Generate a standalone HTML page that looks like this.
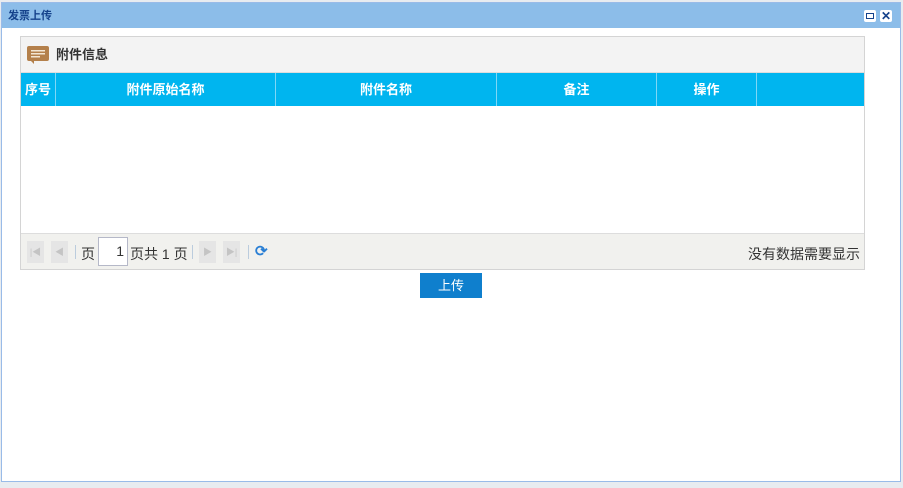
<!DOCTYPE html>
<html><head><meta charset="utf-8"><style>
*{margin:0;padding:0;box-sizing:border-box}
body{width:903px;height:488px;background:#e8ecf0;position:relative;overflow:hidden;font-family:"Liberation Sans","Noto Sans CJK SC",sans-serif;font-size:13px;color:#333}
.win{position:absolute;left:1px;top:2px;width:900px;height:480px;border:1px solid #99bbe8;background:#fff}
.title{height:25px;background:#8cbde9;color:#15428b;font-size:11px;font-weight:bold;line-height:26px;padding-left:6px}
.tb{position:absolute;top:7px;width:12px;height:12px;background:#fff;border-radius:2px}
.panel{position:absolute;left:18px;top:33px;width:845px;height:234px;border:1px solid #d4d4d4}
.ph{height:36px;background:#f3f3f3;border-bottom:1px solid #ddd;font-weight:bold;font-size:13px;line-height:36px;padding-left:35px;position:relative}
.th{height:33px;background:#00b5ef;display:flex;color:#fff;font-weight:bold;font-size:13px}
.th div{border-right:1px solid #7fd7f6;text-align:center;line-height:33px}
.pager{position:absolute;left:0;top:196px;width:843px;height:36px;background:#f1f1ee;border-top:1px solid #ddd}
.pb{position:absolute;top:7px;width:17px;height:22px;background:#e5e5e5;color:#c4c4c4;font-size:9px;line-height:22px;text-align:center}
.sep{position:absolute;top:11px;width:1px;height:14px;background:#bcd}
.t{position:absolute;top:10px;font-size:14px}
.btn{position:absolute;left:418px;top:270px;width:62px;height:25px;background:#0f7fcd;color:#fff;text-align:center;line-height:25px;font-size:13px}
</style></head><body>
<div class="win">
<div class="title">发票上传</div>
<div class="tb" style="left:862px"><div style="position:absolute;left:2px;top:3px;width:8px;height:6px;border:1px solid #15428b"></div></div>
<div class="tb" style="left:878px;color:#15428b;font-size:12px;line-height:12px;text-align:center;font-weight:bold">✕</div>
<div class="panel">
<div class="ph"><svg style="position:absolute;left:6px;top:9px" width="22" height="18"><rect x="0" y="0" width="22" height="15" rx="2" fill="#b4804b"/><rect x="4" y="4" width="14" height="1.5" fill="#f3e6d3"/><rect x="4" y="7" width="14" height="1.5" fill="#f3e6d3"/><rect x="4" y="10" width="9" height="1.5" fill="#f3e6d3"/><path d="M4 15 l3 3 l0 -3z" fill="#b4804b"/></svg>附件信息</div>
<div class="th"><div style="width:35px">序号</div><div style="width:220px">附件原始名称</div><div style="width:221px">附件名称</div><div style="width:160px">备注</div><div style="width:100px">操作</div></div>
<div class="pager">
<div class="pb" style="left:6px">|◀</div><div class="pb" style="left:30px">◀</div>
<div class="sep" style="left:54px"></div>
<span class="t" style="left:60px">页</span>
<div style="position:absolute;left:77px;top:3px;width:30px;height:29px;background:#fff;border:1px solid #b5b8c8;text-align:right;padding-right:3px;line-height:27px;font-size:14px">1</div>
<span class="t" style="left:109px">页共 1 页</span>
<div class="sep" style="left:171px"></div>
<div class="pb" style="left:178px">▶</div><div class="pb" style="left:202px">▶|</div>
<div class="sep" style="left:227px"></div>
<span style="position:absolute;left:234px;top:8px;color:#2a7fd4;font-size:15px;font-weight:bold">⟳</span>
<span class="t" style="right:4px">没有数据需要显示</span>
</div>
</div>
<div class="btn">上传</div>
</div>
</body></html>
